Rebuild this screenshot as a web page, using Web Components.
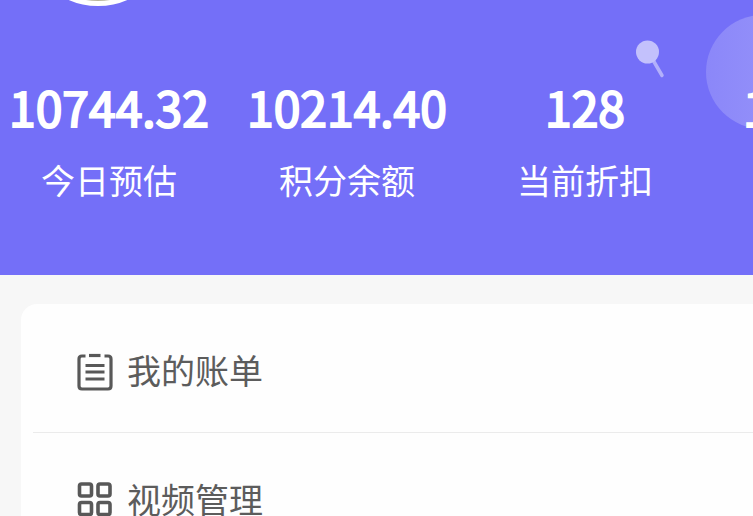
<!DOCTYPE html>
<html lang="zh-CN">
<head>
<meta charset="utf-8">
<meta name="viewport" content="width=device-width, initial-scale=1">
<title>我的</title>
<style>
  html, body { margin: 0; min-height: 100%; background: #f7f7f7; }
  body { height: 100vh; overflow: hidden; font-family: "Noto Sans CJK SC", sans-serif; }
</style>
</head>
<body>
<account-page>
  <account-header slot="header">
    <stat-item value="10744.32">今日预估</stat-item>
    <stat-item value="10214.40">积分余额</stat-item>
    <stat-item value="128">当前折扣</stat-item>
    <stat-item value="100000"></stat-item>
  </account-header>
  <menu-card>
    <menu-item>
      <bill-icon slot="icon"></bill-icon>我的账单
    </menu-item>
    <menu-item>
      <grid-icon slot="icon"></grid-icon>视频管理
    </menu-item>
  </menu-card>
</account-page>

<script>
const define = (name, html, setup) => {
  customElements.define(name, class extends HTMLElement {
    constructor() {
      super();
      this.attachShadow({ mode: "open" }).innerHTML = html;
    }
    connectedCallback() { if (setup) setup(this); }
  });
};

define("account-page", `
  <style>
    :host { display: block; }
    main { padding: 29px 0 0 21px; }
  </style>
  <slot name="header"></slot>
  <main><slot></slot></main>`);

define("account-header", `
  <style>
    :host { display: block; position: relative; overflow: hidden; background: #746ff8; padding: 70px 0 71px; }
    .stats { position: relative; display: flex; margin-left: -10px; }
    .avatar { position: absolute; left: 26px; top: -138px; width: 144px; height: 144px;
      box-sizing: border-box; border: 5px solid #fff; border-radius: 50%; background: #b9b69a; }
    .bubble { position: absolute; left: 706px; top: 15px; width: 114px; height: 114px;
      border-radius: 50%; background: linear-gradient(90deg, #8b87f9, #9a97fa); }
    .pin { position: absolute; left: 634px; top: 38px; }
  </style>
  <div class="avatar"></div>
  <div class="bubble"></div>
  <svg class="pin" width="32" height="42" viewBox="0 0 32 42" aria-hidden="true">
    <path d="M19 22 L28 37.500" stroke="#b3b0fb" stroke-width="3.500" stroke-linecap="round"/>
    <circle cx="13.500" cy="14" r="11.500" fill="#c3c1fc"/>
  </svg>
  <div class="stats"><slot></slot></div>`);

define("stat-item", `
  <style>
    :host { flex: 0 0 238px; display: flex; flex-direction: column; align-items: center;
      color: #fff; white-space: nowrap; }
    strong { font-size: 48px; line-height: 72px; font-weight: 400; -webkit-text-stroke: 2px #fff; }
    span { font-size: 34px; line-height: 48px; margin-top: 14px; font-weight: 400; }
  </style>
  <strong></strong><span><slot></slot></span>`,
  el => { el.shadowRoot.querySelector("strong").textContent = el.getAttribute("value"); });

define("menu-card", `
  <style>
    :host { display: block; background: #fefefe; border-radius: 16px 0 0 0; padding-left: 12px; }
    ::slotted(menu-item:not(:last-child)) { border-bottom: 1px solid #ebebeb; }
  </style>
  <slot></slot>`);

define("menu-item", `
  <style>
    :host { display: block; }
    button { all: unset; box-sizing: border-box; width: 100%; display: flex; align-items: center;
      gap: 14px; height: 128px; padding: 4px 0 0 44px; color: #5c5c5c; cursor: pointer;
      font-size: 34px; line-height: 48px; }
    .icon { display: flex; padding-top: 4px; }
  </style>
  <button type="button"><span class="icon"><slot name="icon"></slot></span><span><slot></slot></span></button>`);

define("bill-icon", `
  <style>:host { display: block; } svg { display: block; }</style>
  <svg width="36" height="38" viewBox="0 0 36 38" fill="none" stroke="#585858" stroke-width="3.200" aria-hidden="true">
    <path d="M8.500 3 H5 Q2 3 2 6 V33 Q2 36 5 36 H31 Q34 36 34 33 V6 Q34 3 31 3 H27.500"/>
    <path d="M12 2.500 H23.500"/>
    <path d="M8.500 12.500 H27.500 M8.500 19 H27.500 M8.500 26 H27.500" stroke-width="2.800"/>
  </svg>`);

define("grid-icon", `
  <style>:host { display: block; } svg { display: block; }</style>
  <svg width="36" height="38" viewBox="0 0 36 38" fill="none" stroke="#585858" stroke-width="3.600" aria-hidden="true">
    <rect x="2.500" y="2" width="12" height="12" rx="2"/>
    <rect x="21" y="2" width="12" height="12" rx="2"/>
    <rect x="2.500" y="20.500" width="12" height="12" rx="2"/>
    <rect x="21" y="20.500" width="12" height="12" rx="2"/>
  </svg>`);
</script>
</body>
</html>
